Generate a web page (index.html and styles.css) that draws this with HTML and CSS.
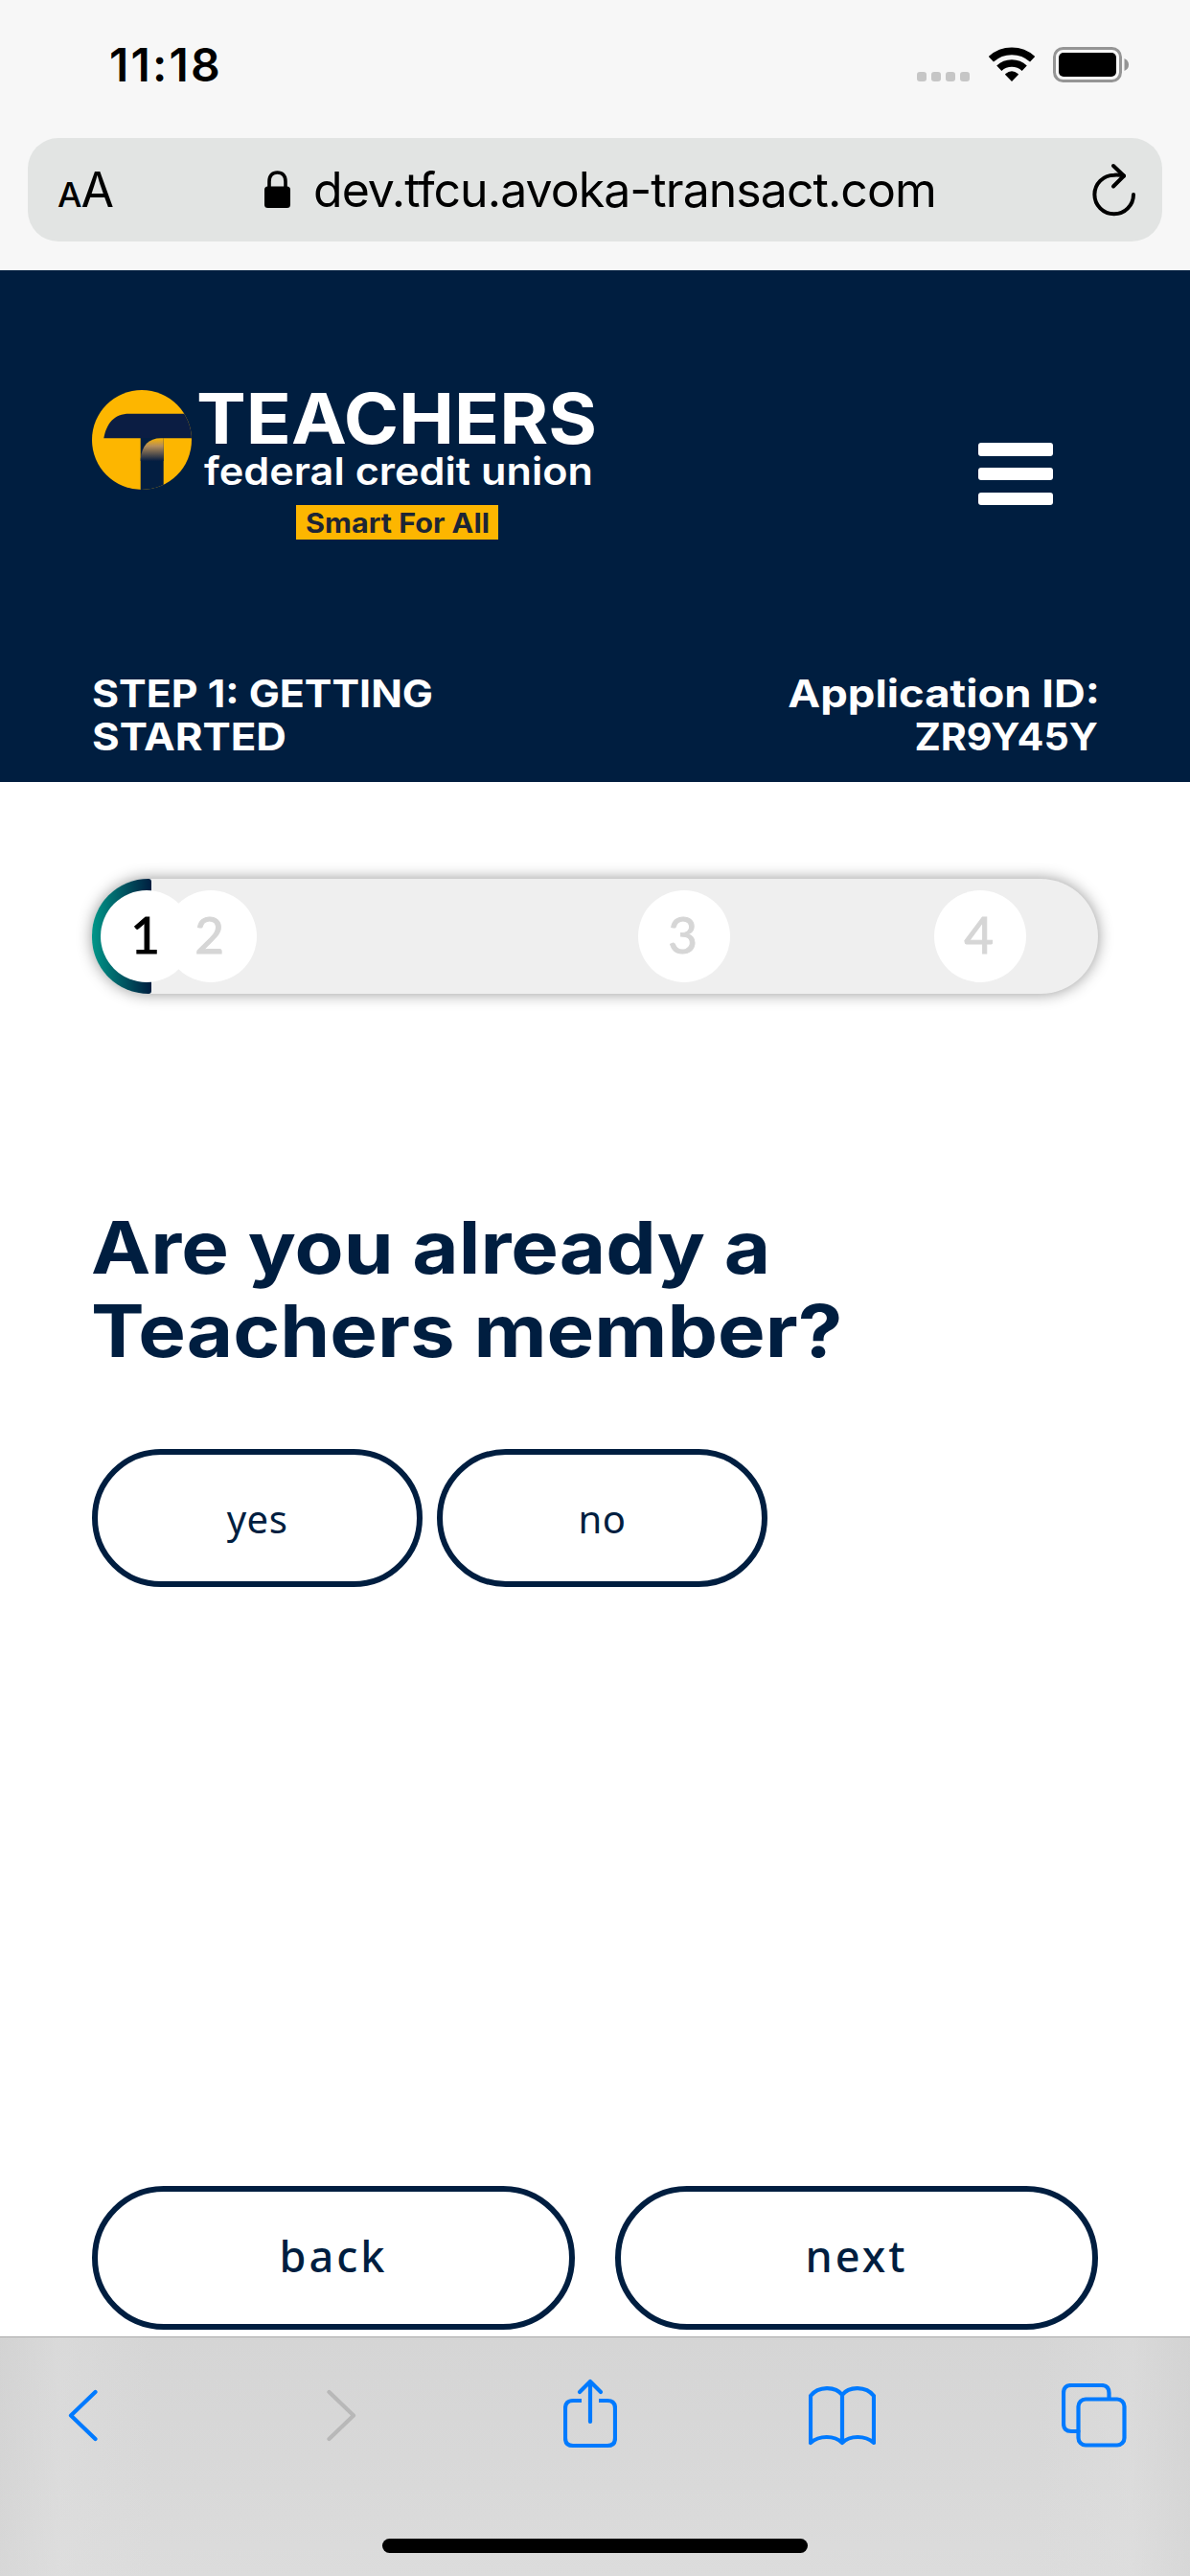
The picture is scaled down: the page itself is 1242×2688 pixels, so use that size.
FILE: index.html
```html
<!DOCTYPE html>
<html lang="en">
<head>
<meta charset="utf-8">
<title>Teachers Federal Credit Union</title>
<link rel="stylesheet" href="styles.css">
</head>
<body>
<div class="screen">
  <div class="browser-top">
    <div class="status-bar">
      <span class="clock">11:18</span>
      <div class="status-icons">
        <div class="signal"><i></i><i></i><i></i><i></i></div>
        <svg class="wifi" width="48" height="37" viewBox="0 0 48 37">
          <g fill="none" stroke="#000" stroke-width="7.6">
            <path d="M2.4 12.8A32 32 0 0 1 45.6 12.8"/>
            <path d="M10.8 22.2A19.4 19.4 0 0 1 37.2 22.2"/>
          </g>
          <path d="M24 36L17.2 28.9Q16.9 28.3 17.4 27.9Q24 22.5 30.6 27.9Q31.1 28.3 30.8 28.9Z"/>
        </svg>
        <svg class="battery" width="80" height="37" viewBox="0 0 80 37">
          <rect x="1.5" y="1.5" width="69" height="34" rx="9" fill="none" stroke="#959595" stroke-width="3"/>
          <rect x="6" y="6" width="60" height="25" rx="5"/>
          <path d="M74.5 12Q79 14 79 18.5T74.5 25Z" fill="#959595"/>
        </svg>
      </div>
    </div>
    <div class="address-bar">
      <div class="text-size"><span class="small-a">A</span><span class="big-a">A</span></div>
      <div class="url">
        <svg width="28" height="40" viewBox="0 0 28 40">
          <path d="M5 18V11.5C5 5 8.500 2 13.500 2S22 5 22 11.500V18" fill="none" stroke="#000" stroke-width="3.600"/>
          <rect x="0" y="16.500" width="27" height="22.500" rx="3.500"/>
        </svg>
        <span>dev.tfcu.avoka-transact.com</span>
      </div>
      <svg class="reload" width="48" height="58" viewBox="0 0 48 58" fill="none" stroke="#000" stroke-width="4" stroke-linecap="round" stroke-linejoin="round">
        <path d="M43 34A20.300 20.300 0 1 1 22.700 13.700Q28 13.300 33 14.500"/>
        <path d="M22 4L33 14.500L22 25.500"/>
      </svg>
    </div>
  </div>

  <header class="site-header">
    <div class="brand-row">
      <svg class="logo" width="560" height="160" viewBox="0 0 560 160">
        <defs>
          <linearGradient id="fold" x1="0" y1="50" x2="0" y2="74" gradientUnits="userSpaceOnUse">
            <stop offset="0" stop-color="#fbb500"/>
            <stop offset=".35" stop-color="#b48d5a"/>
            <stop offset="1" stop-color="#061d41"/>
          </linearGradient>
          <clipPath id="disc"><circle cx="52" cy="52" r="52"/></clipPath>
        </defs>
        <g clip-path="url(#disc)">
          <rect width="104" height="104" fill="#fdb600"/>
          <path d="M12.300 50.300C15 35 23 24.700 39 24.700H106V50.300Z" fill="#0b1d43"/>
          <path d="M50.700 50V106H74.700V50Z" fill="#031e41"/>
          <path d="M50.700 72C52 58 59 50.300 72 50.300H74.700V74H50.700Z" fill="url(#fold)"/>
        </g>
        <g class="wordmark">
          <text class="name" x="109" y="56" textLength="418" lengthAdjust="spacingAndGlyphs">TEACHERS</text>
          <text class="sub" x="117" y="98.500" textLength="406" lengthAdjust="spacingAndGlyphs">federal credit union</text>
        </g>
        <rect x="213" y="120" width="211" height="36" fill="#fdb600"/>
        <text class="tag" x="223" y="148.500" textLength="192" lengthAdjust="spacingAndGlyphs">Smart For All</text>
      </svg>
      <div class="menu"><i></i><i></i><i></i></div>
    </div>
    <div class="step-row">
      <div class="step-name"><div class="l1">STEP 1: GETTING</div><div class="l2">STARTED</div></div>
      <div class="app-id"><div class="l3">Application ID:</div><div class="l4">ZR9Y45Y</div></div>
    </div>
  </header>

  <main class="page">
    <div class="progress">
      <div class="progress-fill"></div>
      <span class="step step-1">1</span>
      <span class="step step-2">2</span>
      <span class="step step-3">3</span>
      <span class="step step-4">4</span>
    </div>
    <h1><span class="q1">Are you already a</span><span class="q2">Teachers member?</span></h1>
    <div class="answers">
      <button>yes</button>
      <button>no</button>
    </div>
    <div class="nav-buttons">
      <button>back</button>
      <button>next</button>
    </div>
  </main>

  <footer class="toolbar">
    <div class="tools">
      <svg class="t-back" width="31" height="55" viewBox="0 0 31 55"><path d="M28.500 3L3 27.500L28.500 52"/></svg>
      <svg class="t-forward" width="31" height="55" viewBox="0 0 31 55"><path d="M2.500 3L28 27.500L2.500 52"/></svg>
      <svg class="t-share" width="56" height="74" viewBox="0 0 56 74">
        <path d="M19 23H10Q2 23 2 31V62Q2 70 10 70H46Q54 70 54 62V31Q54 23 46 23H37"/>
        <path class="arrow" d="M28 45V3M17 14L28 3L39 14"/>
      </svg>
      <svg class="t-book" width="70" height="64" viewBox="0 0 70 64">
        <path d="M2 59V10C10 -.300 28 -.300 35 9C42 -.300 60 -.300 68 10V59C59 51 43 51 35 59C27 51 11 51 2 59ZM35 9V59"/>
      </svg>
      <svg class="t-tabs" width="68" height="68" viewBox="0 0 68 68">
        <path d="M17.500 50H10Q2 50 2 42V10Q2 2 10 2H41.500Q49.500 2 49.500 10V16"/>
        <rect x="17.500" y="16.500" width="48" height="48" rx="7.500"/>
      </svg>
    </div>
    <div class="home-indicator"></div>
  </footer>
</div>
</body>
</html>
```
FILE: styles.css
```css
* { box-sizing: border-box; }

body {
  margin: 0;
  background: #fff;
  font-family: Inter, "Liberation Sans", sans-serif;
}

svg { display: block; }

.screen {
  width: 1242px;
  height: 2688px;
  display: flex;
  flex-direction: column;
  overflow: hidden;
}

/* Browser chrome */
.browser-top {
  height: 282px;
  flex: none;
  background: #f7f7f7;
}

.status-bar {
  height: 144px;
  display: flex;
  justify-content: space-between;
  padding: 38px 63px 0 114px;
}

.clock {
  font-size: 48px;
  line-height: 60px;
  font-weight: 600;
  letter-spacing: 2.2px;
}

.status-icons {
  display: flex;
  align-items: flex-start;
  padding-top: 11px;
}

.signal {
  display: flex;
  gap: 5px;
  margin: 26px 20px 0 0;
}

.signal i {
  width: 10px;
  height: 10px;
  border-radius: 3px;
  background: #c6c6c6;
}

.battery { margin-left: 19px; }

.address-bar {
  height: 108px;
  margin: 0 29px;
  padding: 0 25px 0 31px;
  display: flex;
  align-items: center;
  border-radius: 32px;
  background: #e2e4e3;
}

.text-size {
  display: flex;
  align-items: baseline;
  width: 216px;
  padding-top: 4px;
  line-height: 104px;
}

.small-a { font-size: 36px; font-weight: 500; }
.big-a { font-size: 50px; margin-left: -1px; }

.url {
  flex: 1;
  display: flex;
  align-items: center;
  gap: 23px;
  font-size: 50px;
  line-height: 108px;
  letter-spacing: -0.96px;
  white-space: nowrap;
}

/* Site header */
.site-header {
  height: 534px;
  flex: none;
  padding: 125px 96px 0;
  background: #001e40;
  color: #fff;
}

.brand-row {
  display: flex;
  justify-content: space-between;
  height: 294px;
}

.logo text { font-weight: 700; }
.logo .wordmark { fill: #fff; }
.logo .name { font-size: 73px; }
.logo .sub { font-size: 40px; font-weight: 600; }
.logo .tag { font-size: 28px; fill: #1d2535; }

.menu {
  display: flex;
  flex-direction: column;
  gap: 12.3px;
  margin: 55px 47px 0 0;
}

.menu i {
  width: 78px;
  height: 13.6px;
  border-radius: 3px;
  background: #fff;
}

.step-row {
  display: flex;
  justify-content: space-between;
  font-size: 40px;
  line-height: 45px;
  font-weight: 700;
}

.step-name,
.app-id {
  display: flex;
  flex-direction: column;
  align-items: flex-start;
}

.app-id { align-items: flex-end; }

/* Headings are set in an extended width */
.l1 { transform: scaleX(1.072); transform-origin: left; }
.l2 { transform: scaleX(1.095); transform-origin: left; }
.l3 { transform: scaleX(1.135); transform-origin: right; margin-right: -2px; }
.l4 { transform: scaleX(1.03); transform-origin: right; }

/* Page */
.page {
  height: 1622px;
  flex: none;
  padding: 101px 96px 0;
}

.progress {
  position: relative;
  height: 120px;
  border-radius: 60px;
  background: #efefef;
  box-shadow: 0 0 16px rgba(0, 0, 0, 0.42);
}

.progress-fill {
  width: 62px;
  height: 120px;
  border-radius: 60px 3px 3px 60px;
  background: linear-gradient(90deg, #009688, #001e40);
}

.step {
  position: absolute;
  top: 12px;
  width: 96px;
  height: 96px;
  padding-right: 3px;
  border-radius: 50%;
  background: #fff;
  color: #d6d6d6;
  font: 400 53px/91px Lato, sans-serif;
  text-align: center;
  -webkit-text-stroke: 1px currentColor;
}

.step-1 { left: 9px; color: #000; z-index: 1; background: none; }
.step-1::before {
  content: "";
  position: absolute;
  inset: 0;
  z-index: -1;
  border-radius: 50%;
  background: #fff;
}
.step-2 { left: 76px; z-index: 0; }
.step-3 { left: 570px; }
.step-4 { left: 879px; }

h1 {
  margin: 221px 0 0;
  color: #001e40;
  font-size: 76px;
  line-height: 87px;
  font-weight: 700;
}

h1 span {
  display: block;
  width: max-content;
  transform: scaleX(1.098);
  transform-origin: left;
}
.q1, .q2 { margin-left: -1px; }

button {
  border: 6px solid #001e40;
  background: #fff;
  color: #001e40;
  font-family: "Noto Sans", sans-serif;
}

.answers {
  display: flex;
  gap: 15px;
  margin-top: 80px;
}

.answers button {
  width: 345px;
  height: 144px;
  padding: 0;
  border-radius: 72px;
  font-size: 40px;
  letter-spacing: 0.5px;
}

.nav-buttons {
  display: flex;
  justify-content: space-between;
  margin-top: 625px;
}

.nav-buttons button {
  width: 504px;
  height: 150px;
  padding: 0 0 5px;
  border-radius: 75px;
  font-size: 45px;
  font-weight: 500;
  letter-spacing: 3px;
}

/* Bottom toolbar */
.toolbar {
  flex: 1;
  border-top: 1px solid #a9a9a9;
  background:
    linear-gradient(90deg, rgba(205, 205, 205, 0.3), rgba(224, 224, 224, 0.4) 5%, transparent 13%, transparent 87%, rgba(224, 224, 224, 0.4) 95%, rgba(205, 205, 205, 0.3)),
    linear-gradient(#d5d5d5, #d8d8d8 50%, #dcdcdc);
}

.tools {
  display: flex;
  align-items: flex-start;
  height: 210px;
  padding-left: 71px;
  fill: none;
  stroke: #007aff;
  stroke-width: 4.2;
  stroke-linecap: round;
  stroke-linejoin: round;
}

.t-back { margin-top: 54px; }
.t-forward { margin: 54px 0 0 239px; stroke: #b8b8b8; }
.t-share { margin: 43px 0 0 216px; stroke-linecap: butt; }
.t-share .arrow { stroke-linecap: round; }
.t-book { margin: 51px 0 0 200px; }
.t-tabs { margin: 48px 0 0 194px; }

.home-indicator {
  width: 444px;
  height: 15px;
  margin: 0 auto;
  border-radius: 8px;
  background: #000;
}
```
